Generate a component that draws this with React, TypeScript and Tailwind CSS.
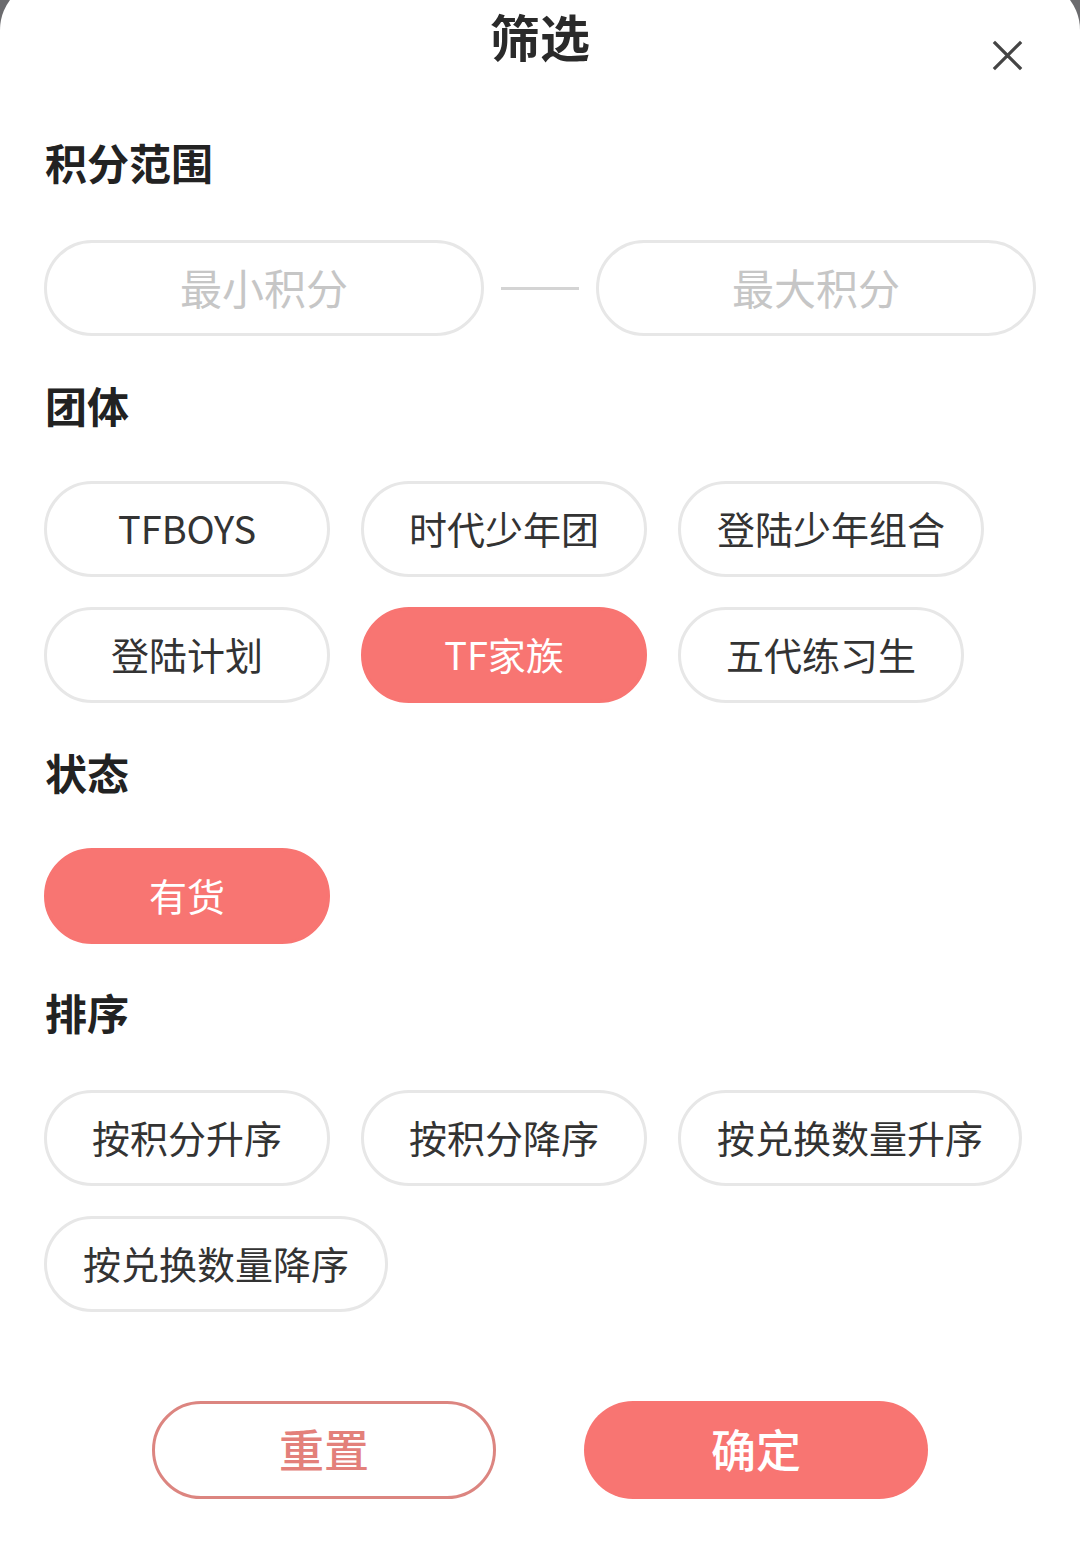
import React from 'react';

const font = { fontFamily: '"Noto Sans CJK SC", "Noto Sans", sans-serif' };

const groups = ['TFBOYS', '时代少年团', '登陆少年组合', '登陆计划', 'TF家族', '五代练习生'];
const sorts = ['按积分升序', '按积分降序', '按兑换数量升序', '按兑换数量降序'];

const Chip: React.FC<{ label: string; active?: boolean }> = ({ label, active }) => (
  <button
    className={
      active
        ? 'h-[96px] min-w-[286px] px-[36px] rounded-full border-[3px] border-[#f87572] bg-[#f87572] text-white text-[38px] leading-none flex items-center justify-center'
        : 'h-[96px] min-w-[286px] px-[36px] rounded-full border-[3px] border-[#e7e7e7] bg-white text-[#333333] text-[38px] leading-none flex items-center justify-center'
    }
  >
    <span className="-mt-[3px]">{label}</span>
  </button>
);

const Heading: React.FC<{ children: React.ReactNode; className?: string }> = ({ children, className }) => (
  <h3 className={`text-[42px] leading-none font-bold text-[#222222] ${className ?? ''}`}>{children}</h3>
);

const App: React.FC = () => {
  return (
    <div className="w-[1080px] h-[1549px] bg-[#6b6b6e] overflow-hidden" style={font}>
      <div className="relative -mt-[20px] h-[1569px] bg-white rounded-t-[50px] pt-[30px]">
        {/* Header */}
        <h2 className="text-center text-[50px] leading-none font-bold text-[#2a2a2a]">筛选</h2>
        <button className="absolute right-[57px] top-[60px] w-[31px] h-[31px] text-[#444444]">
          <svg viewBox="0 0 31 31" width="31" height="31" fill="none" stroke="currentColor" strokeWidth="3.2" strokeLinecap="square">
            <path d="M3 3 L28 28 M28 3 L3 28" />
          </svg>
        </button>

        <div className="px-[44px]">
          {/* 积分范围 */}
          <Heading className="mt-[81px] ml-[1px]">积分范围</Heading>
          <div className="mt-[57px] flex items-center">
            <div className="w-[440px] h-[96px] rounded-full border-[3px] border-[#e7e7e7] flex items-center justify-center text-[42px] text-[#c6c6c6] leading-none">
              <span className="-mt-[3px]">最小积分</span>
            </div>
            <div className="mx-[17px] w-[78px] h-[3px] bg-[#d4d4d4]" />
            <div className="flex-1 h-[96px] rounded-full border-[3px] border-[#e7e7e7] flex items-center justify-center text-[42px] text-[#c6c6c6] leading-none">
              <span className="-mt-[3px]">最大积分</span>
            </div>
          </div>

          {/* 团体 */}
          <Heading className="mt-[48px] ml-[1px]">团体</Heading>
          <div className="mt-[55px] flex flex-wrap gap-x-[31px] gap-y-[30px]">
            {groups.map((g) => (
              <Chip key={g} label={g} active={g === 'TF家族'} />
            ))}
          </div>

          {/* 状态 */}
          <Heading className="mt-[48px] ml-[1px]">状态</Heading>
          <div className="mt-[55px] flex">
            <Chip label="有货" active />
          </div>

          {/* 排序 */}
          <Heading className="mt-[47px] ml-[1px]">排序</Heading>
          <div className="mt-[57px] flex flex-wrap gap-x-[31px] gap-y-[30px]">
            {sorts.map((s) => (
              <Chip key={s} label={s} />
            ))}
          </div>
        </div>

        {/* Footer buttons */}
        <div className="mt-[89px] flex justify-center gap-[88px]">
          <button className="w-[344px] h-[98px] rounded-full border-[3px] border-[#dc8580] bg-white text-[#e3807a] text-[45px] leading-none font-medium flex items-center justify-center">
            <span className="-mt-[3px]">重置</span>
          </button>
          <button className="w-[344px] h-[98px] rounded-full bg-[#f87572] text-white text-[45px] leading-none font-medium flex items-center justify-center">
            <span className="-mt-[3px]">确定</span>
          </button>
        </div>
      </div>
    </div>
  );
};

export default App;
